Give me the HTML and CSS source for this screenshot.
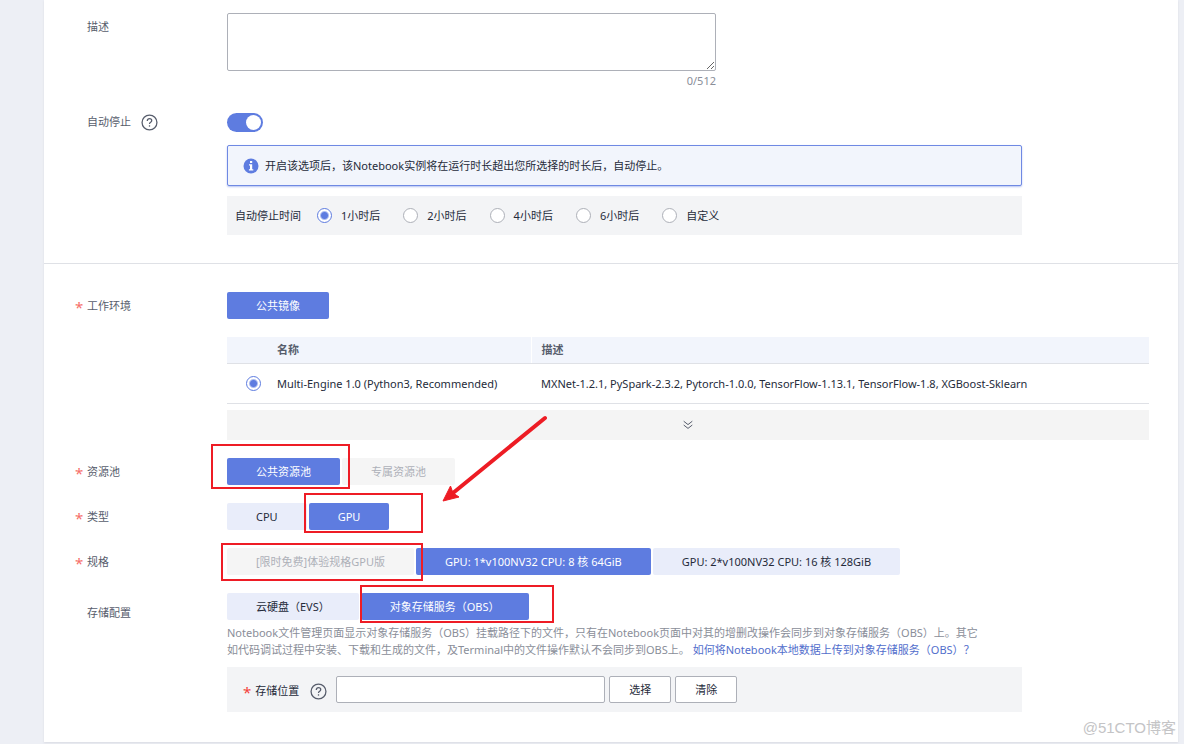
FILE: index.html
```
<!DOCTYPE html>
<html lang="zh-CN">
<head>
<meta charset="utf-8">
<meta name="viewport" content="width=device-width, initial-scale=1">
<title>创建Notebook</title>
<link rel="stylesheet" href="styles.css">
</head>
<body>
<main class="card">
  <form class="form">
    <section class="section section-basic">
      <div class="row row-desc">
        <label class="label" for="desc">描述</label>
        <div class="field field-desc">
          <textarea class="textarea" id="desc"></textarea>
          <span class="counter">0/512</span>
        </div>
      </div>
      <div class="row">
        <div class="label">
          <label for="auto-stop">自动停止</label>
          <svg class="help" viewBox="0 0 16 16" aria-hidden="true"><circle cx="8" cy="8" r="7"/><path d="M5.9 6.5c0-1.3.9-2.1 2.1-2.1s2.1.8 2.1 1.9c0 1.500-2.100 1.500-2.100 3.100"/><path d="M8 10.600v1.300"/></svg>
        </div>
        <div class="field">
          <input class="switch" type="checkbox" id="auto-stop" checked>
          <div class="notice">
            <svg class="info" viewBox="0 0 16 16" aria-hidden="true"><circle cx="8" cy="8" r="7.500"/><rect x="7" y="3" width="2.200" height="2"/><path d="M6 6.200h3.200v5H10.300v1.300H5.900v-1.300H7V7.500H6z"/></svg>
            <span>开启该选项后，该Notebook实例将在运行时长超出您所选择的时长后，自动停止。</span>
          </div>
          <div class="panel times" role="radiogroup" aria-label="自动停止时间">
            <span class="times-title">自动停止时间</span>
            <label class="option"><input class="radio" type="radio" name="time" checked>1小时后</label>
            <label class="option"><input class="radio" type="radio" name="time">2小时后</label>
            <label class="option"><input class="radio" type="radio" name="time">4小时后</label>
            <label class="option"><input class="radio" type="radio" name="time">6小时后</label>
            <label class="option"><input class="radio" type="radio" name="time">自定义</label>
          </div>
        </div>
      </div>
    </section>

    <section class="section section-env">
      <div class="row">
        <div class="label required">工作环境</div>
        <div class="field">
          <div class="choices"><button class="choice active" type="button">公共镜像</button></div>
          <table class="table">
            <thead>
              <tr><th class="col-pick"></th><th class="col-name">名称</th><th class="col-desc">描述</th></tr>
            </thead>
            <tbody>
              <tr>
                <td class="col-pick"><input class="radio" type="radio" name="engine" id="engine" checked aria-label="Multi-Engine 1.0"></td>
                <td><label for="engine">Multi-Engine 1.0 (Python3, Recommended)</label></td>
                <td class="col-desc">MXNet-1.2.1, PySpark-2.3.2, Pytorch-1.0.0, TensorFlow-1.13.1, TensorFlow-1.8, XGBoost-Sklearn</td>
              </tr>
            </tbody>
          </table>
          <button class="expand" type="button" aria-label="展开">
            <svg class="chevrons" viewBox="0 0 10 10" aria-hidden="true"><path d="M.7 1.200 5 4.600 9.300 1.200M.7 5 5 8.400 9.300 5"/></svg>
          </button>
        </div>
      </div>
      <div class="row">
        <div class="label required">资源池</div>
        <div class="choices">
          <button class="choice active" type="button">公共资源池</button>
          <button class="choice" type="button" disabled>专属资源池</button>
        </div>
      </div>
      <div class="row">
        <div class="label required">类型</div>
        <div class="choices">
          <button class="choice" type="button">CPU</button>
          <button class="choice active" type="button">GPU</button>
        </div>
      </div>
      <div class="row">
        <div class="label required">规格</div>
        <div class="choices">
          <button class="choice" type="button" disabled>[限时免费]体验规格GPU版</button>
          <button class="choice active" type="button">GPU: 1*v100NV32 CPU: 8 核 64GiB</button>
          <button class="choice" type="button">GPU: 2*v100NV32 CPU: 16 核 128GiB</button>
        </div>
      </div>
      <div class="row">
        <div class="label label-storage">存储配置</div>
        <div class="field">
          <div class="choices">
            <button class="choice" type="button">云硬盘（EVS）</button>
            <button class="choice active" type="button">对象存储服务（OBS）</button>
          </div>
          <p class="hint">Notebook文件管理页面显示对象存储服务（OBS）挂载路径下的文件，只有在Notebook页面中对其的增删改操作会同步到对象存储服务（OBS）上。其它<br>如代码调试过程中安装、下载和生成的文件，及Terminal中的文件操作默认不会同步到OBS上。 <a class="link" href="#">如何将Notebook本地数据上传到对象存储服务（OBS）？</a></p>
          <div class="panel location">
            <div class="location-title">
              <label class="location-label" for="path">存储位置</label>
              <svg class="help" viewBox="0 0 16 16" aria-hidden="true"><circle cx="8" cy="8" r="7"/><path d="M5.9 6.500c0-1.300.9-2.100 2.100-2.100s2.100.8 2.100 1.900c0 1.500-2.100 1.500-2.100 3.100"/><path d="M8 10.600v1.300"/></svg>
            </div>
            <input class="path" type="text" id="path">
            <button class="plain" type="button">选择</button>
            <button class="plain" type="button">清除</button>
          </div>
        </div>
      </div>
    </section>
  </form>
</main>
<svg class="marks" width="600" height="640" aria-hidden="true">
  <g class="mark-box">
    <rect x="212" y="445" width="137" height="43"/>
    <rect x="305" y="494" width="117" height="38"/>
    <rect x="222" y="544" width="200" height="36"/>
    <rect x="361" y="586" width="192" height="36"/>
  </g>
  <path class="mark-line" d="M545 418 453 493"/>
  <path class="mark-head" d="M443 501 450.500 486 453 493 459 497z"/>
</svg>
<span class="watermark">@51CTO博客</span>
</body>
</html>
```
FILE: styles.css
```
* { box-sizing: border-box; }

body {
  margin: 0;
  padding: 0 6px 2px 44px;
  position: relative;
  background: #edeff5;
  color: #252b3a;
  font: 11px/16px "Noto Sans", "Noto Sans CJK SC", sans-serif;
}

button, input, textarea { font: inherit; color: inherit; margin: 0; }
button { cursor: pointer; }

.card { background: #fff; box-shadow: 0 1px 2px #d9dbe2; }

.section { padding: 0 29px 0 43px; }
.section-basic { padding-top: 13px; padding-bottom: 28px; border-bottom: 1px solid #dfe1e6; }
.section-env {
  display: flex;
  flex-direction: column;
  gap: 18px;
  padding-top: 28px;
  padding-bottom: 30px;
}

.row { display: grid; grid-template-columns: 140px minmax(0, 1fr); }
.row-desc { margin-bottom: 24px; }

.label {
  position: relative;
  display: flex;
  align-items: center;
  align-self: start;
  gap: 10px;
  min-height: 28px;
  color: #575d6c;
}
.section-basic .label { min-height: 18px; }
.section-basic .row-desc .label { min-height: 28px; }
.label-storage { padding-top: 12px; }
.required::before {
  content: "*";
  position: absolute;
  left: -12px;
  top: 7px;
  color: #f66f6a;
  font-size: 15px;
}
.section-env .row { max-height: max-content; }

.help { width: 17px; height: 17px; fill: none; stroke: #575d6c; stroke-width: 1.2; }

.field-desc { max-width: 489px; display: flex; flex-direction: column; }
.textarea {
  display: block;
  width: 100%;
  height: 58px;
  border: 1px solid #adb0b8;
  border-radius: 2px;
  background: #fff;
  resize: vertical;
}
.counter { align-self: flex-end; padding-top: 2px; color: #8a8e99; }

.switch {
  appearance: none;
  display: block;
  width: 36px;
  height: 19px;
  padding: 2px;
  border-radius: 10px;
  background: #5e7ce0;
}
.switch::before {
  content: "";
  display: block;
  width: 15px;
  height: 15px;
  margin-left: auto;
  border-radius: 50%;
  background: #fff;
}

.notice {
  display: flex;
  align-items: center;
  gap: 6px;
  max-width: 795px;
  height: 41px;
  margin-top: 13px;
  padding: 0 15px;
  border: 1px solid #6f89e3;
  border-radius: 2px;
  background: #f2f5fc;
  box-shadow: 0 1px 2px #b5c3f2;
}
.info { width: 16px; height: 16px; fill: #fff; }
.info circle { fill: #5e7ce0; }

.panel { display: flex; align-items: center; max-width: 795px; background: #f3f4f6; }
.times { gap: 23px; height: 39px; margin-top: 10px; padding: 0 8px; }
.times-title { margin-right: -7px; }
.option { display: flex; align-items: center; gap: 9px; }

.radio {
  appearance: none;
  display: block;
  width: 15px;
  height: 15px;
  border: 1px solid #adb0b8;
  border-radius: 50%;
  background: #fff;
}
.radio:checked { border-color: #5e7ce0; background: radial-gradient(#5e7ce0 0 3px, #fff 5px); }

.choices { display: flex; flex-wrap: wrap; gap: 2px; align-items: flex-start; }
.choice {
  height: 27px;
  padding: 1px 29px 0;
  border: 0;
  border-radius: 2px;
  background: #e9edfa;
}
.choice.active { background: #5e7ce0; color: #fff; }
.choice:disabled { background: #f5f5f5; color: #adb0b8; }
.section-env { gap: 17px; }

.table { width: 100%; margin-top: 18px; border-collapse: collapse; table-layout: fixed; }
.table th, .table td { padding: 1px 0 0; text-align: left; border-bottom: 1px solid #dfe1e6; }
.table th { height: 26px; background: #f2f5fc; color: #575d6c; font-weight: 700; }
.table td { height: 40px; }
.table .col-pick { width: 50px; padding-left: 19px; }
.table .col-name { width: 254px; }
.table .col-desc { padding-left: 10px; }
.table th.col-desc { border-left: 1px solid #fff; }

.expand {
  display: grid;
  place-items: center;
  width: 100%;
  height: 30px;
  margin: 6px 0 1px;
  padding: 1px 0 0;
  border: 0;
  background: #f4f4f4;
}
.chevrons { width: 10px; height: 10px; fill: none; stroke: #575d6c; }

.hint { margin: 4px 0 9px; color: #8a8e99; line-height: 17px; }
.link { color: #526ecc; text-decoration: none; }

.location { gap: 4px; height: 45px; padding: 0 16px; }
.location-title { display: flex; align-items: center; gap: 11px; padding: 4px 5px 0 0; }
.location-label::before { content: "*"; margin-right: 4px; color: #f3413b; font-size: 15px; vertical-align: -3px; }
.path, .plain {
  height: 27px;
  border: 1px solid #adb0b8;
  border-radius: 2px;
  background: #fff;
}
.path { width: 269px; }
.plain { width: 62px; padding: 1px 0 0; }

.marks { position: absolute; left: 0; top: 0; pointer-events: none; fill: none; }
.mark-box { stroke: #ee1c25; stroke-width: 2; }
.mark-line { stroke: #ed1c24; stroke-width: 4; stroke-linecap: round; }
.mark-head { fill: #ed1c24; stroke: #ed1c24; }

.watermark {
  position: absolute;
  right: 8px;
  bottom: 6px;
  color: #c4c4c6;
  font-family: "Liberation Sans", "Noto Sans CJK SC", sans-serif;
  font-size: 15px;
  line-height: 20px;
}
```
